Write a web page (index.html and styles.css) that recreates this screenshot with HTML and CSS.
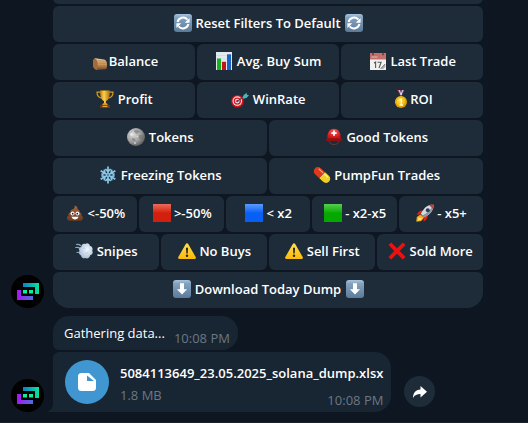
FILE: index.html
```html
<!DOCTYPE html>
<html lang="en">
<head>
<meta charset="utf-8">
<meta name="viewport" content="width=device-width, initial-scale=1">
<title>Chat</title>
<link rel="stylesheet" href="styles.css">
</head>
<body>
<svg class="defs" aria-hidden="true">
  <defs>
    <linearGradient id="g-key" x1="0" y1="0" x2="0" y2="1"><stop offset="0" stop-color="#a9c3dc"/><stop offset=".2" stop-color="#83a2bf"/><stop offset="1" stop-color="#5b7b9a"/></linearGradient>
    <linearGradient id="g-wood" x1="0" y1="0" x2="0" y2="1"><stop offset="0" stop-color="#ecc796"/><stop offset=".55" stop-color="#c8935a"/><stop offset="1" stop-color="#6f4320"/></linearGradient>
    <linearGradient id="g-gold" x1="0" y1="0" x2="1" y2="0"><stop offset="0" stop-color="#b87a0a"/><stop offset=".4" stop-color="#ffd14a"/><stop offset="1" stop-color="#a96a05"/></linearGradient>
    <radialGradient id="g-medal" cx=".4" cy=".35" r=".7"><stop offset="0" stop-color="#ffe24a"/><stop offset=".6" stop-color="#f5bb10"/><stop offset="1" stop-color="#c98500"/></radialGradient>
    <radialGradient id="g-moon" cx=".35" cy=".35" r=".7"><stop offset="0" stop-color="#dcdcdc"/><stop offset=".55" stop-color="#a5a5a5"/><stop offset="1" stop-color="#5c5c5c"/></radialGradient>
    <radialGradient id="g-helmet" cx=".5" cy=".25" r=".8"><stop offset="0" stop-color="#ff5a50"/><stop offset=".5" stop-color="#d81e1e"/><stop offset="1" stop-color="#8c0b0e"/></radialGradient>
    <linearGradient id="g-red" x1="0" y1="0" x2="0" y2="1"><stop offset="0" stop-color="#ea6c5c"/><stop offset=".4" stop-color="#d9301b"/><stop offset=".5" stop-color="#d3200e"/><stop offset="1" stop-color="#d3200e"/></linearGradient>
    <linearGradient id="g-blue" x1="0" y1="0" x2="0" y2="1"><stop offset="0" stop-color="#5c9aff"/><stop offset=".4" stop-color="#1c6cfa"/><stop offset=".5" stop-color="#075ff5"/><stop offset="1" stop-color="#075ff5"/></linearGradient>
    <linearGradient id="g-green" x1="0" y1="0" x2="0" y2="1"><stop offset="0" stop-color="#55cf50"/><stop offset=".4" stop-color="#18b312"/><stop offset=".5" stop-color="#05a800"/><stop offset="1" stop-color="#05a800"/></linearGradient>
    <linearGradient id="g-poo" x1="0" y1="0" x2="0" y2="1"><stop offset="0" stop-color="#a5673f"/><stop offset="1" stop-color="#6b3a1e"/></linearGradient>
    <linearGradient id="g-warn" x1="0" y1="0" x2="0" y2="1"><stop offset="0" stop-color="#ffe04d"/><stop offset="1" stop-color="#fcb90c"/></linearGradient>
    <radialGradient id="g-puff" cx=".6" cy=".4" r=".65"><stop offset="0" stop-color="#f2f7fd"/><stop offset="1" stop-color="#a9bdd6"/></radialGradient>
    <linearGradient id="g-logo-a" x1="0" y1="0" x2="1" y2="0"><stop offset="0" stop-color="#0b7fc4"/><stop offset="1" stop-color="#08e39c"/></linearGradient>
    <linearGradient id="g-logo-b" x1="0" y1="0" x2="1" y2="0"><stop offset="0" stop-color="#ad12f5"/><stop offset="1" stop-color="#4a70dc"/></linearGradient>

    <symbol id="i-reset" viewBox="0 0 18 18">
      <rect width="18" height="18" rx="3" fill="url(#g-key)"/>
      <path d="M3.600 8A5.600 5.600 0 0 1 13.400 5.600M14.400 10A5.600 5.600 0 0 1 4.600 12.400" fill="none" stroke="#fff" stroke-width="2"/>
      <path d="M15.600 4v4.800h-4.900zM2.400 14V9.200h4.900z" fill="#fff"/>
    </symbol>
    <symbol id="i-down" viewBox="0 0 18 18">
      <rect width="18" height="18" rx="3" fill="url(#g-key)"/>
      <path d="M7 3.200h4v6h3.100L9 14.600 3.900 9.200H7z" fill="#fff"/>
    </symbol>
    <symbol id="i-wood" viewBox="0 0 18 18">
      <path d="M4.500 6.200 13 7.400c2 .4 3 2.400 3 5 0 2.800-.4 4.600-1.400 4.900L6.500 18C3.500 18 2 15.600 2 12c0-3.600 1-5.900 2.500-5.800z" fill="url(#g-wood)"/>
      <path d="M3.300 6.600c2.700.5 3.700 3.200 3.500 6.300-.1 2-.4 3.800-.9 5C3.400 17.600 2 15.500 2 12c0-2.600.5-4.600 1.300-5.400z" fill="#a06c3c"/>
      <path d="M7 8.500l7.500 1M7.300 11l8.200.4M7.200 14l8.300-.3" stroke="#a8733f" stroke-width=".5"/>
    </symbol>
    <symbol id="i-chart" viewBox="0 0 18 18">
      <rect x="1" width="16" height="18" fill="#e3e9f0"/>
      <path d="M1 3.500h16M1 7h16M1 10.500h16M1 14h16" stroke="#c9d4e0" stroke-width=".6"/>
      <path d="M2 6.500h4V18H2z" fill="#12b51c"/><path d="M7 9.800h4V18H7z" fill="#c4141b"/><path d="M12 2.300h4V18h-4z" fill="#1a62c4"/>
    </symbol>
    <symbol id="i-calendar" viewBox="0 0 18 18">
      <path d="M1 1.500h16V18H1z" fill="#f1f1ef"/><path d="M1 1.500h16v6H1z" fill="#c56f6c"/>
      <path d="M2.500 5h6" stroke="#e7b5b0" stroke-width="1"/>
      <path d="M4 .3v3M14 .3v3" stroke="#4b3638" stroke-width="1.300"/>
      <path d="M5 11l1.600-1v6M8.500 10.200h3.600L10 16" fill="none" stroke="#55595c" stroke-width="1.100"/>
      <path d="M11.800 16.500l4.200-4.500.6 2.800-2.400 2.500z" fill="#b5b6b6"/><path d="M11.500 17l4.700-5" stroke="#55585b" stroke-width=".8"/>
    </symbol>
    <symbol id="i-trophy" viewBox="0 0 18 18">
      <path d="M4.500 2.200H1c0 3 1.800 5.400 5 6M13.500 2.200H17c0 3-1.800 5.400-5 6" fill="none" stroke="#d69a1c" stroke-width="1.200"/>
      <path d="M4 .5h10c0 5-1 9.500-4 10.500v3H8v-3C5 10 4 5.500 4 .5z" fill="url(#g-gold)"/>
      <path d="M7 13.300h4l1 2H6z" fill="#d99a1e"/><path d="M4.200 15h9.600v3H4.200z" fill="#7b3510"/><path d="M6.500 15.800h5v1.300h-5z" fill="#e6a52a"/>
    </symbol>
    <symbol id="i-target" viewBox="0 0 18 18">
      <circle cx="6.500" cy="11.300" r="6.300" fill="#c8141e"/><circle cx="6.300" cy="11.100" r="4.800" fill="#f3dfe0"/><circle cx="6.300" cy="11.100" r="3.700" fill="#d21e28"/><circle cx="6.300" cy="11.100" r="2.300" fill="#f3dfe0"/><circle cx="6.300" cy="11.100" r="1.200" fill="#c8141e"/>
      <path d="M6.300 11.100 13 6.500" stroke="#30484e" stroke-width="1.100"/>
      <path d="M11.500 7.800 12.700 5l3-2.200.2 2 2.100.5-2.600 2.600-2.900.8z" fill="#45b7bb"/>
    </symbol>
    <symbol id="i-medal" viewBox="0 0 18 18">
      <path d="M5.500 0h3l2 4.500L9 6.500z" fill="#c93b4c"/><path d="M12.500 0h-3L7.600 4.500 9 6.500z" fill="#5260b8"/><path d="M7 0l2.300 5M11 0 8.900 5" stroke="#eceaf2" stroke-width=".9"/>
      <circle cx="9" cy="12" r="6" fill="url(#g-medal)"/><circle cx="9" cy="12" r="4.800" fill="none" stroke="#cf9208" stroke-width=".5"/>
      <path d="M7.500 10.200 9.300 9v6M7.500 15h3.500" fill="none" stroke="#fff6cf" stroke-width="1.300"/>
    </symbol>
    <symbol id="i-moon" viewBox="0 0 18 18">
      <circle cx="9" cy="9" r="9" fill="url(#g-moon)"/>
      <path d="M7 2.500c2-1 5-.2 6 1.300-1 1.500-2.500.7-3 2.200-1.500 0-3-2-3-3.500zM12 7c2-.5 4 .5 4.500 2-.5 2-2.500 3-4 2-1-1-1.500-3-.5-4zM6 10c1.500 0 3 1.500 2.500 2.500S5.500 13 5 12s0-2 1-2z" fill="#707070" opacity=".55"/>
      <circle cx="4.500" cy="6.500" r="1.200" fill="#eee"/><circle cx="8" cy="15" r="1" fill="#ccc"/><circle cx="10.500" cy="8.500" r=".8" fill="#ddd"/>
    </symbol>
    <symbol id="i-helmet" viewBox="0 0 18 18">
      <path d="M4 12c0 3 2 4.600 5 4.600s5-1.600 5-4.600" fill="none" stroke="#5a3b32" stroke-width="1"/>
      <path d="M2.300 10C2.300 4 5 .8 9 .8S15.700 4 15.700 10L17.500 12.300c-2.500 1.200-5 .5-8.500.5s-6 .7-8.500-.5z" fill="url(#g-helmet)"/>
      <path d="M.5 12.300c2-1.800 5-2 8.500-2s6.500.2 8.500 2c-2.500 1.200-5 .7-8.500.7s-6 .5-8.500-.7z" fill="#8e1013"/>
      <path d="M8.100 2.500h1.800v1.700h1.700V6H9.900v1.700H8.100V6H6.400V4.200h1.700z" fill="#fff"/>
    </symbol>
    <symbol id="i-snow" viewBox="0 0 18 18">
      <g fill="none" stroke="#8cc8ea" stroke-width="1.700">
        <g id="snow-arm"><path d="M9 9V.5M9 5.600 6.300 3M9 5.600 11.700 3"/></g>
        <use href="#snow-arm" transform="rotate(60 9 9)"/><use href="#snow-arm" transform="rotate(120 9 9)"/><use href="#snow-arm" transform="rotate(180 9 9)"/><use href="#snow-arm" transform="rotate(240 9 9)"/><use href="#snow-arm" transform="rotate(300 9 9)"/>
      </g>
      <circle cx="9" cy="9" r="1" fill="#3a7fae"/>
    </symbol>
    <symbol id="i-pill" viewBox="0 0 18 18">
      <g transform="rotate(43 9 9)">
        <path d="M9 4.800h5.500a4.200 4.200 0 0 1 0 8.400H9z" fill="#f0d024"/><path d="M9 4.800H3.500a4.200 4.200 0 0 0 0 8.400H9z" fill="#dd3a1c"/>
        <path d="M3 6.700h5" stroke="#f59a80" stroke-width="1.300" stroke-linecap="round"/><path d="M10.500 6.700h4" stroke="#fbf08c" stroke-width="1.300" stroke-linecap="round"/>
      </g>
    </symbol>
    <symbol id="i-poo" viewBox="0 0 18 18">
      <path d="M8.500 1.500c2 .5 3.500 1.700 3 3.800 1.700.5 2.500 1.700 2.200 3.300 1.800.4 2.300 1.800 1.800 3.200 2 .7 2.200 4.700-1.500 5H4c-3.700-.3-3.800-4.300-1.500-5-.4-1.600.3-2.900 1.800-3.200C4 6.500 5.300 5.400 7 5.200 8.500 4.500 9 3 8.500 1.500z" fill="url(#g-poo)"/>
      <circle cx="6.500" cy="9.500" r="2" fill="#fff"/><circle cx="11.500" cy="9.500" r="2" fill="#fff"/><circle cx="6.700" cy="9.700" r=".9" fill="#222"/><circle cx="11.300" cy="9.700" r=".9" fill="#222"/>
      <path d="M5.500 12.700h7c-.5 2-2 2.700-3.500 2.700s-3-.7-3.500-2.700z" fill="#fff"/>
    </symbol>
    <symbol id="i-red" viewBox="0 0 18 18"><path d="M0 0h18v18H0z" fill="url(#g-red)"/></symbol>
    <symbol id="i-blue" viewBox="0 0 18 18"><path d="M0 0h18v18H0z" fill="url(#g-blue)"/></symbol>
    <symbol id="i-green" viewBox="0 0 18 18"><path d="M0 0h18v18H0z" fill="url(#g-green)"/></symbol>
    <symbol id="i-rocket" viewBox="0 0 18 18">
      <path d="M4.500 10.500.8 13 .3 17.700l4.900-.7 3-3.500z" fill="#f7a81b"/><path d="M2.500 13.500l-1 3.200 3.300-.8 1.400-1.800z" fill="#ffe65c"/>
      <path d="M7 6.500C4 6 1.800 8 .8 11l4-.8zM11.500 11c.5 3-1 5.500-4 6.600l.3-4z" fill="#d5261b"/>
      <path d="M17.500.8C12 .5 8.500 3 4.800 9.800l3.400 3.500C15 10 17.700 6 17.500.8z" fill="#d3dae2"/>
      <path d="M17.500.8c0 5.200-2.500 9.200-9.300 12.500l-1.700-1.700C12 8.500 15.500 5 17.500.8z" fill="#8995a5"/>
      <path d="M17.500.8c-1.500-.1-2.900 0-4.200.5L17 5c.4-1.400.5-2.800.5-4.200z" fill="#c93a2c"/>
      <circle cx="11.800" cy="6.300" r="2" fill="#2b3f5a"/>
    </symbol>
    <symbol id="i-puff" viewBox="0 0 18 18">
      <path d="M1.500 2.500c2-.4 3 0 4 1M.8 5.500c1.500-.4 2.800-.2 3.700.5M2 10.500c1-.4 1.700-.3 2.500 0" fill="none" stroke="#8fa9c8" stroke-width="1.200" stroke-linecap="round"/>
      <path d="M6.200 5C6.300 2.500 8.300 1 10.300 2c1.700-1.500 4.500-.3 4.600 2 2.300.3 3.400 2.700 2.300 4.500 1.200 2 .2 4.400-2 4.700-.4 2.500-2.800 3.900-4.700 2.800-2 1-4.300-.3-4.400-2.500-2-.6-2.800-3-1.600-4.600C3.400 7.300 4.200 5.300 6.200 5z" fill="url(#g-puff)"/>
      <path d="M8 6.500c1-.8 2-.6 2.500.2M10.500 11c1.100.5 2.100 0 2.500-.9" fill="none" stroke="#b5c6dc" stroke-width=".8"/>
    </symbol>
    <symbol id="i-warn" viewBox="0 0 18 18">
      <path d="M9 1.200c.5 0 .9.200 1.200.7l7.500 13.200c.5.900.1 1.800-1 1.800H1.300c-1.100 0-1.500-.9-1-1.800L7.800 1.900c.3-.5.7-.7 1.200-.7z" fill="url(#g-warn)"/>
      <path d="M8 5.800h2l-.3 5.700H8.300z" fill="#222"/><circle cx="9" cy="13.700" r="1.200" fill="#222"/>
    </symbol>
    <symbol id="i-cross" viewBox="0 0 18 18">
      <path d="M3.200.5 9 6.200 14.800.5l2.700 2.600L11.700 9l5.800 5.900-2.700 2.600L9 11.800l-5.800 5.700L.5 14.900 6.300 9 .5 3.100z" fill="#ea1111"/>
    </symbol>
    <symbol id="logo" viewBox="0 0 33 33">
      <circle cx="16.500" cy="16.500" r="16.500" fill="#000"/>
      <path d="M12 8h16v11h-4v-7H12z" fill="url(#g-logo-a)"/>
      <path d="M6 15h4v6h12v4H6z" fill="url(#g-logo-b)"/>
      <path d="M12 15h4v3.500h-4zM18 15h4v3.500h-4z" fill="#0bf09a"/>
    </symbol>
  </defs>
</svg>

<main class="chat">
  <section class="message">
    <svg class="avatar" role="img" aria-label="Bot avatar"><use href="#logo"/></svg>
    <div class="keyboard">
      <div class="row row-cut"><button type="button" aria-label="Previous option"></button></div>
      <div class="row"><button type="button"><svg class="emoji"><use href="#i-reset"/></svg> Reset Filters To Default <svg class="emoji"><use href="#i-reset"/></svg></button></div>
      <div class="row">
        <button type="button"><svg class="emoji"><use href="#i-wood"/></svg>Balance</button>
        <button type="button"><svg class="emoji"><use href="#i-chart"/></svg> Avg. Buy Sum</button>
        <button type="button"><svg class="emoji"><use href="#i-calendar"/></svg> Last Trade</button>
      </div>
      <div class="row">
        <button type="button"><svg class="emoji"><use href="#i-trophy"/></svg> Profit</button>
        <button type="button"><svg class="emoji"><use href="#i-target"/></svg> WinRate</button>
        <button type="button"><svg class="emoji"><use href="#i-medal"/></svg>ROI</button>
      </div>
      <div class="row">
        <button type="button"><svg class="emoji"><use href="#i-moon"/></svg> Tokens</button>
        <button type="button"><svg class="emoji"><use href="#i-helmet"/></svg> Good Tokens</button>
      </div>
      <div class="row">
        <button type="button"><svg class="emoji"><use href="#i-snow"/></svg> Freezing Tokens</button>
        <button type="button"><svg class="emoji"><use href="#i-pill"/></svg> PumpFun Trades</button>
      </div>
      <div class="row">
        <button type="button"><svg class="emoji"><use href="#i-poo"/></svg> &lt;-50%</button>
        <button type="button"><svg class="emoji"><use href="#i-red"/></svg> &gt;-50%</button>
        <button type="button"><svg class="emoji"><use href="#i-blue"/></svg> &lt; x2</button>
        <button type="button"><svg class="emoji"><use href="#i-green"/></svg> - x2-x5</button>
        <button type="button"><svg class="emoji"><use href="#i-rocket"/></svg> - x5+</button>
      </div>
      <div class="row">
        <button type="button"><svg class="emoji"><use href="#i-puff"/></svg> Snipes</button>
        <button type="button"><svg class="emoji"><use href="#i-warn"/></svg> No Buys</button>
        <button type="button"><svg class="emoji"><use href="#i-warn"/></svg> Sell First</button>
        <button type="button"><svg class="emoji"><use href="#i-cross"/></svg> Sold More</button>
      </div>
      <div class="row row-last"><button type="button"><svg class="emoji"><use href="#i-down"/></svg> Download Today Dump <svg class="emoji"><use href="#i-down"/></svg></button></div>
    </div>
  </section>

  <section class="message">
    <svg class="avatar" role="img" aria-label="Bot avatar"><use href="#logo"/></svg>
    <div class="bubbles">
      <div class="bubble bubble-text">
        <p>Gathering data...</p>
        <time>10:08 PM</time>
      </div>
      <div class="file-line">
        <div class="bubble bubble-file">
          <svg class="tail" viewBox="0 0 6 8" aria-hidden="true"><path d="M6 0v8H0c3.500-1.500 5.500-4 6-8z"/></svg>
          <svg class="file-icon" viewBox="0 0 44 44" aria-hidden="true">
            <circle cx="22" cy="22" r="22" fill="#4096d1"/>
            <path d="M16.500 13H24l7 7v7.500a3.500 3.500 0 0 1-3.500 3.500h-11a3.500 3.500 0 0 1-3.500-3.500v-11a3.500 3.500 0 0 1 3.500-3.500z" fill="#fff"/>
            <path d="M22 15.500v5.500h7z" fill="#4096d1"/>
          </svg>
          <div class="file-info">
            <a class="file-name" href="#file">5084113649_23.05.2025_solana_dump.xlsx</a>
            <div class="file-meta"><span>1.8 MB</span><time>10:08 PM</time></div>
          </div>
        </div>
        <button class="share" type="button" aria-label="Forward">
          <svg viewBox="0 0 16 14" aria-hidden="true"><path d="M8.500 1 15 6.700 8.500 12.400V9C5 9 2.600 10 1 13c0-5 2.500-8.300 7.500-8.600z" fill="#fff"/></svg>
        </button>
      </div>
    </div>
  </section>
</main>
</body>
</html>
```
FILE: styles.css
```css
* {
  box-sizing: border-box;
}

body {
  margin: 0;
  min-height: 100vh;
  background: #0e1621;
  color: #fff;
  font: 13px/18px "Open Sans", "Noto Sans", sans-serif;
  overflow: hidden;
}

.defs {
  position: absolute;
  width: 0;
  height: 0;
}

.chat {
  min-height: 100vh;
  padding: 0 45px 10px 11px;
  border-bottom: 1px solid #17212b;
}

.message {
  display: flex;
  align-items: flex-end;
  gap: 9px;
}

.message + .message {
  margin-top: 8px;
}

.avatar {
  flex: none;
  width: 33px;
  height: 33px;
}

.keyboard {
  flex: 1;
  display: flex;
  flex-direction: column;
  gap: 2px;
}

.row {
  display: flex;
  gap: 2px;
}

.row-cut {
  margin-top: -32px;
}

.row button {
  flex: 1 1 0;
  min-width: 0;
  height: 36px;
  padding: 0 0 2px;
  border: 0;
  border-radius: 6px;
  background: #1e2c39;
  color: #fff;
  font: inherit;
  font-weight: 600;
  white-space: nowrap;
}

.row-last button {
  border-radius: 6px 6px 16px 16px;
}

.emoji {
  width: 18px;
  height: 18px;
  margin-left: 1px;
  vertical-align: -4px;
}

.bubbles {
  display: flex;
  flex-direction: column;
  align-items: flex-start;
  gap: 2px;
}

.bubble {
  display: flex;
  background: #182533;
}

.bubble p {
  margin: 0;
}

.bubble time,
.file-meta {
  color: #6c7883;
}

.bubble-text {
  gap: 9px;
  padding: 8px 8px 8px 11px;
  border-radius: 16px 16px 16px 6px;
}

.bubble-text time {
  position: relative;
  top: 5px;
}

.file-line {
  display: flex;
  align-items: flex-end;
  gap: 13px;
}

.bubble-file {
  position: relative;
  gap: 11px;
  padding: 8px 8px 8px 12px;
  border-radius: 6px 16px 16px 0;
}

.tail {
  position: absolute;
  right: 100%;
  bottom: 0;
  width: 6px;
  height: 8px;
  fill: #182533;
}

.file-icon {
  flex: none;
  width: 44px;
  height: 44px;
}

.file-info {
  padding-top: 4px;
}

.file-name {
  display: block;
  color: #fff;
  font-weight: 600;
  text-decoration: none;
}

.file-meta {
  display: flex;
  justify-content: space-between;
  margin-top: 4px;
}

.file-meta time {
  position: relative;
  top: 5px;
}

.share {
  display: grid;
  place-items: center;
  width: 31px;
  height: 31px;
  margin-bottom: 5px;
  padding: 0;
  border: 0;
  border-radius: 50%;
  background: #1e2c39;
}

.share svg {
  width: 16px;
  height: 14px;
}
```
